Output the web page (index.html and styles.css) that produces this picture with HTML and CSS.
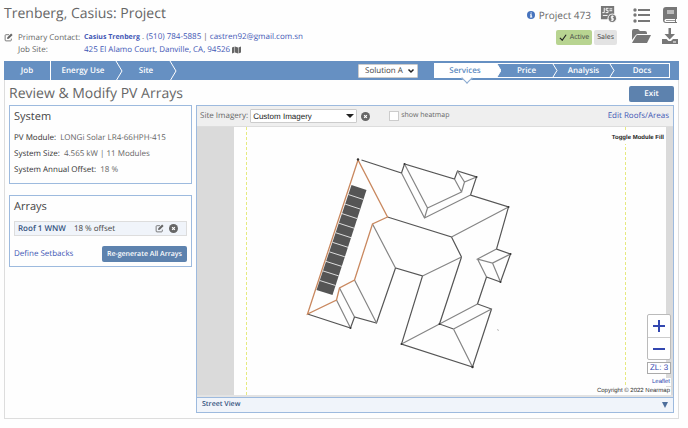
FILE: index.html
```html
<!DOCTYPE html>
<html lang="en">
<head>
    <meta charset="UTF-8">
    <meta name="viewport" content="width=device-width, initial-scale=1.0">
    <title>Trenberg, Casius: Project</title>
    <link rel="stylesheet" href="styles.css">
</head>
<body>

<header class="page-header">
    <div class="project-info">
        <h1>Trenberg, Casius: Project</h1>
        <div class="contact-grid">
            <a href="#" class="icon-link" aria-label="Edit contact">
                <svg class="icon-edit" viewBox="0 0 16 16"><path d="M9 3H3.500Q2 3 2 4.500V12.500Q2 14 3.500 14H11.500Q13 14 13 12.500V10" fill="none" stroke="currentColor" stroke-width="1.500"/><path d="M5.500 10.700L6 7.600L12.700 1L15.300 3.600L8.600 10.200Z" fill="currentColor"/></svg>
            </a>
            <span>Primary Contact:</span>
            <span class="contact-value"><a href="#"><b>Casius Trenberg</b></a> . <a href="#">(510) 784-5885</a> | <a href="#">castren92@gmail.com.sn</a></span>
            <span class="second-row">Job Site:</span>
            <span class="contact-value"><a href="#">425 El Alamo Court, Danville, CA, 94526</a>
                <svg class="icon-map" viewBox="0 0 18 16"><path d="M0 3L5 1V13L0 15ZM6 1L12 3V15L6 13ZM13 3L18 1V13L13 15Z" fill="#666"/></svg>
            </span>
        </div>
    </div>

    <div class="project-status">
        <div class="project-number">
            <svg class="icon-info" viewBox="0 0 16 16"><circle cx="8" cy="8" r="8" fill="#4673bd"/><path d="M7 3H9.500V5.200H7ZM6 6.500H9.500V11H10.500V12.800H6V11H7V8.300H6Z" fill="#fff"/></svg>
            <span>Project 473</span>
            <svg class="icon-report" viewBox="0 0 18 18"><path d="M1 0H15V9H10L8 14H1Z" fill="#777"/><path d="M4.500 2V7H2.500M9 2.500H6.500V4.500H8.500V7H6M10 3H13M10 5H13M3 10H8" fill="none" stroke="#fff" stroke-width="1"/><circle cx="13" cy="13" r="4.500" fill="#777" stroke="#fff"/><path d="M14.500 11H12V13H14V15H11.500M13 10V16" fill="none" stroke="#fff" stroke-width="1"/></svg>
        </div>
        <div class="badges">
            <span class="badge badge-active">
                <svg class="icon-check" viewBox="0 0 10 9"><path d="M1 5L4 8L9 1" fill="none" stroke="#222" stroke-width="1.500"/></svg>
                Active
            </span>
            <span class="badge">Sales</span>
        </div>
    </div>

    <div class="header-tools">
        <a href="#" aria-label="List"><svg viewBox="0 0 20 18"><g fill="none" stroke="currentColor" stroke-width="2"><path d="M7 4H19M7 9H19M7 15H19"/></g><g fill="currentColor"><circle cx="4" cy="4" r="1.700"/><circle cx="4" cy="9" r="1.700"/><circle cx="4" cy="15" r="1.700"/></g></svg></a>
        <a href="#" aria-label="Notes"><svg viewBox="0 0 20 18"><path d="M7 1H18V13H17V16H18V17H7Q4 17 4 14V4Q4 1 7 1Z" fill="currentColor"/><path d="M8 5H15M8 7H15" stroke="#fff" stroke-width="1"/><path d="M7 13H16V16H7Q5.500 16 5.500 14.500Q5.500 13 7 13Z" fill="#fff"/><path d="M7 14.500H16" stroke="#999" stroke-width="1"/></svg></a>
        <a href="#" aria-label="Files"><svg viewBox="0 0 20 18"><path d="M1 13V4Q1 2 3 2H7L9 4H14Q16 4 16 6V7H7Q5 7 4 9Z" fill="currentColor"/><path d="M6 8H20L16 16H1L5 9Z" fill="currentColor"/></svg></a>
        <a href="#" aria-label="Download"><svg viewBox="0 0 20 18"><path d="M9.500 1H12V7H16L10.700 12.500L5.500 7H9.500Z" fill="currentColor"/><path d="M3 12H7.500L9.500 14H12L14 12H19V17H3Z" fill="currentColor"/><path d="M14 15H17" stroke="#fff" stroke-width="1"/></svg></a>
    </div>
</header>

<main class="workspace">
    <nav class="nav-bar">
        <a href="#" class="step step-job">Job</a>
        <a href="#" class="step step-energy">Energy Use</a>
        <svg class="chevron" viewBox="0 0 8 20"><path d="M1 0L7 10L1 20"/></svg>
        <a href="#" class="step step-site">Site</a>
        <svg class="chevron" viewBox="0 0 8 20"><path d="M1 0L7 10L1 20"/></svg>

        <div class="select-wrap solution">
            <select aria-label="Solution">
                <option>Solution A</option>
            </select>
            <svg viewBox="0 0 8 8"><path d="M1.500 2.500L4 5L6.500 2.500" fill="none" stroke="#222" stroke-width="1.500"/></svg>
        </div>

        <div class="tabs">
            <a href="#" class="tab active">Services</a>
            <svg class="tab-chevron" viewBox="0 0 6 13"><path d="M0 0H2L6 6.500L2 13H0Z" fill="#fff"/></svg>
            <a href="#" class="tab">Price</a>
            <svg class="tab-chevron" viewBox="0 0 6 13"><path d="M1 0L5 6.500L1 13"/></svg>
            <a href="#" class="tab">Analysis</a>
            <svg class="tab-chevron" viewBox="0 0 6 13"><path d="M1 0L5 6.500L1 13"/></svg>
            <a href="#" class="tab tab-last">Docs</a>
        </div>
    </nav>

    <div class="title-row">
        <h2>Review &amp; Modify PV Arrays</h2>
        <button class="btn btn-exit">Exit</button>
    </div>

    <div class="content">
        <aside class="sidebar">
            <section class="panel system">
                <h3>System</h3>
                <p><b>PV Module:</b> LONGi Solar LR4-66HPH-415</p>
                <p><b>System Size:</b> 4.565 kW | 11 Modules</p>
                <p><b>System Annual Offset:</b> 18 %</p>
            </section>

            <section class="panel arrays">
                <h3>Arrays</h3>
                <div class="array-row">
                    <span class="array-name">Roof 1 WNW</span>
                    <span>18 % offset</span>
                    <a href="#" class="icon-link array-edit" aria-label="Edit array">
                        <svg class="icon-edit" viewBox="0 0 16 16"><path d="M9 3H3.500Q2 3 2 4.500V12.500Q2 14 3.500 14H11.500Q13 14 13 12.500V10" fill="none" stroke="currentColor" stroke-width="1.500"/><path d="M5.500 10.700L6 7.600L12.700 1L15.300 3.600L8.600 10.200Z" fill="currentColor"/></svg>
                    </a>
                    <a href="#" class="icon-link" aria-label="Remove array">
                        <svg class="icon-close" viewBox="0 0 16 16"><circle cx="8" cy="8" r="8" fill="currentColor"/><path d="M5.500 5.500L10.500 10.500M10.500 5.500L5.500 10.500" stroke="#fff" stroke-width="2"/></svg>
                    </a>
                </div>
                <div class="array-actions">
                    <a href="#">Define Setbacks</a>
                    <button class="btn btn-generate">Re-generate All Arrays</button>
                </div>
            </section>
        </aside>

        <section class="map-panel">
            <div class="map-toolbar">
                <label for="imagery">Site Imagery:</label>
                <div class="select-wrap imagery">
                    <select id="imagery">
                        <option>Custom Imagery</option>
                    </select>
                    <svg viewBox="0 0 8 8"><path d="M0 2H8L4 6Z" fill="#222"/></svg>
                </div>
                <a href="#" class="icon-link" aria-label="Clear imagery">
                    <svg class="icon-close" viewBox="0 0 16 16"><circle cx="8" cy="8" r="8" fill="currentColor"/><path d="M5.500 5.500L10.500 10.500M10.500 5.500L5.500 10.500" stroke="#fff" stroke-width="2"/></svg>
                </a>
                <input type="checkbox" id="heatmap">
                <label for="heatmap" class="heatmap-label">show heatmap</label>
                <a href="#" class="edit-roofs">Edit Roofs/Areas</a>
            </div>

            <div class="map">
                <div class="map-sheet">
                    <div class="map-bounds">
                        <svg class="roof" viewBox="300 150 220 225">
                            <!-- outer edges -->
                            <g fill="none" stroke="#555" stroke-width="1.200">
                                <path d="M361 160L401 173L404 164L454 179L457 171L476 177L470 195L508 207L496 249L510 254L500 282L486 277L477 304L491 309L472 367L401 344L422 276L395 268L376 323L354 317L350 328L307 314"/>
                                <path d="M387 217L451 237L461 257L439 324L453 329"/>
                            </g>
                            <!-- ridges and valleys -->
                            <g fill="none" stroke="#858585" stroke-width="1.200">
                                <path d="M401 173L424 218L470 195M404 164L427 208L461 192L454 179M427 208L424 218M457 171L464 182L476 177M464 182L461 192"/>
                                <path d="M451 237L508 207M422 276L461 257M372 224L395 268M354 280L376 323M339 288L354 317M336 300L350 328"/>
                                <path d="M401 344L439 324L477 304M453 329L491 309M453 329L472 367"/>
                                <path d="M496 249L477 259L492 263L510 254M492 263L500 282M477 259L486 277"/>
                            </g>
                            <!-- selected roof -->
                            <path d="M357.500 160L307 314L336 300L339 288L354 280L372 224L387 217Z" fill="none" stroke="#c9885f" stroke-width="1.300"/>
                            <g fill="#333">
                                <circle cx="357.500" cy="159.500" r="1.200"/><circle cx="404" cy="164" r="1"/><circle cx="476" cy="177" r="1"/><circle cx="508" cy="207" r="1"/><circle cx="510" cy="254" r="1"/><circle cx="500" cy="282" r="1"/><circle cx="472" cy="367" r="1.200"/><circle cx="401" cy="344" r="1"/><circle cx="350" cy="328" r="1"/><circle cx="439" cy="324" r="1"/>
                            </g>
                            <!-- 11 modules -->
                            <path d="M351 185L366 190L332 295L316 290Z" fill="#555"/>
                            <path d="M347.800 194.500L362.900 199.500M344.600 204.100L359.800 209.100M341.500 213.600L356.700 218.600M338.300 223.200L353.600 228.200M335.100 232.700L350.500 237.700M331.900 242.300L347.500 247.300M328.700 251.800L344.400 256.800M325.500 261.400L341.300 266.400M322.400 270.900L338.200 275.900M319.200 280.500L335.100 285.500" stroke="#ddd" stroke-width="1"/>
                            <path d="M497 329L498 331" stroke="#bbb"/>
                        </svg>
                    </div>
                </div>
                <div class="fill-toggle">Toggle Module Fill</div>
                <div class="map-controls">
                    <div class="zoom">
                        <button aria-label="Zoom in"><svg viewBox="0 0 14 14"><path d="M7 1V13M1 7H13"/></svg></button>
                        <button aria-label="Zoom out"><svg viewBox="0 0 14 14"><path d="M1 7H13"/></svg></button>
                    </div>
                    <div class="zoom-level">ZL: 3</div>
                    <a href="#">Leaflet</a>
                    <span>Copyright © 2022 Nearmap</span>
                </div>
            </div>

            <div class="street-view">
                <span>Street View</span>
                <svg viewBox="0 0 8 8"><path d="M1 1H7L4 7Z"/></svg>
            </div>
        </section>
    </div>
</main>

</body>
</html>
```
FILE: styles.css
```css
* {
    box-sizing: border-box;
}

body {
    margin: 0;
    padding: 4px 9px 8px 4px;
    background: #fefefe;
    color: #666;
    font-family: "Open Sans", sans-serif;
    font-size: 8px;
    line-height: 12px;
    text-rendering: geometricPrecision;
}

h1, h2, h3, p {
    margin: 0;
    font-weight: normal;
}

a {
    color: #4257b5;
    text-decoration: none;
}

svg {
    display: block;
}

select, button, input {
    font-family: inherit;
    font-size: 8px;
    margin: 0;
    text-rendering: inherit;
}

/* Header */
.page-header {
    display: flex;
    height: 57px;
}

.project-info {
    flex: 1;
}

h1, h2 {
    font-size: 14px;
    line-height: 20px;
}

.contact-grid {
    display: grid;
    grid-template-columns: 14px 66px 1fr;
    align-items: center;
    margin-top: 7px;
}

.second-row {
    grid-column: 2;
}

.contact-value b {
    font-size: 7px;
    font-weight: 700;
}

.icon-link {
    color: #666;
}

.icon-edit, .icon-close {
    width: 9px;
    height: 9px;
}

.icon-map {
    display: inline-block;
    width: 9px;
    height: 8px;
    vertical-align: middle;
}

.project-number {
    display: flex;
    align-items: center;
    justify-content: flex-end;
    height: 21px;
    font-size: 10px;
}

.icon-info {
    width: 8px;
    height: 8px;
    margin-right: 4px;
}

.icon-report {
    width: 17px;
    height: 17px;
    margin-left: 9px;
}

.badges {
    display: flex;
    justify-content: flex-end;
    gap: 2px;
    margin-top: 5px;
}

.badge {
    display: flex;
    align-items: center;
    gap: 3px;
    height: 15px;
    padding: 0 3px;
    border-radius: 2px;
    background: #e3e3e3;
    color: #444;
    font-size: 7px;
}

.badge-active {
    background: #b8d491;
}

.icon-check {
    width: 8px;
    height: 7px;
}

.header-tools {
    display: grid;
    grid-template-columns: 20px 20px;
    gap: 3px 8px;
    align-content: start;
    margin: 2px 0 0 14px;
}

.header-tools a {
    color: #777;
}

.header-tools svg {
    width: 20px;
    height: 18px;
}

/* Navigation */
.workspace {
    border: 1px solid #ddd;
    border-top: 0;
}

.nav-bar {
    display: flex;
    align-items: center;
    height: 19px;
    margin: 0 -1px;
    background: #6690c2;
}

.step, .tab {
    color: #fff;
    font-weight: 600;
    text-align: center;
}

.step {
    line-height: 19px;
}

.step-job {
    width: 47px;
    border-right: 1px solid #fff;
}

.step-energy {
    width: 64px;
}

.step-site {
    width: 46px;
}

.chevron, .tab-chevron {
    fill: none;
    stroke: #fff;
    stroke-width: 1;
}

.chevron {
    width: 8px;
    height: 20px;
}

.select-wrap {
    position: relative;
}

.select-wrap select {
    display: block;
    width: 100%;
    height: 14px;
    padding: 0 6px;
    border: 1px solid #ccc;
    border-radius: 1px;
    background: #fff;
    color: #444;
    appearance: none;
}

.select-wrap svg {
    position: absolute;
    top: 3px;
    right: 3px;
    width: 8px;
    height: 8px;
    pointer-events: none;
}

.solution {
    width: 60px;
    margin-left: auto;
}

.tabs {
    display: flex;
    align-items: center;
    width: 236px;
    height: 15px;
    margin: 0 9px 0 16px;
    border: 1px solid #fff;
}

.tab {
    flex: 0 0 51px;
    line-height: 13px;
}

.tab.active {
    position: relative;
    flex-basis: 60px;
    background: #fff;
    color: #5c8ac0;
}

.tab.tab-last {
    flex: 1;
}

.tab.active::after {
    content: "";
    position: absolute;
    left: 28px;
    bottom: -5px;
    width: 7px;
    height: 7px;
    border: 1px solid #8aaad0;
    border-top: 0;
    border-left: 0;
    background: #fff;
    transform: rotate(45deg);
}

.tab-chevron {
    width: 6px;
    height: 13px;
}

/* Page content */
.title-row {
    display: flex;
    align-items: center;
    justify-content: space-between;
    height: 25px;
    padding: 2px 4px 0;
}

.btn {
    height: 16px;
    padding: 0 5px;
    border: 0;
    border-radius: 2px;
    background: #5d82ae;
    color: #fff;
    font-weight: 600;
}

.btn-exit {
    width: 45px;
}

.btn-generate {
    font-size: 7px;
}

.content {
    display: flex;
    gap: 4px;
    padding: 0 4px 5px;
}

.sidebar {
    display: flex;
    flex: 0 0 183px;
    flex-direction: column;
    gap: 11px;
}

.panel {
    padding: 3px 4px;
    border: 1px solid #9dbade;
}

h3 {
    color: #444;
    font-size: 11px;
    line-height: 16px;
}

.system {
    height: 79px;
}

.system p {
    line-height: 16px;
}

.system h3 {
    margin-bottom: 5px;
}

.system b {
    margin-right: 2px;
    color: #333;
    font-weight: 500;
}

.arrays {
    height: 72px;
}

.array-row {
    display: flex;
    align-items: center;
    gap: 8px;
    height: 15px;
    margin-top: 6px;
    padding: 0 8px 0 3px;
    border: 1px solid #ddd;
    background: #f0f4fa;
    color: #444;
}

.array-name {
    color: #34527e;
    font-weight: 600;
}

.array-edit {
    margin-left: auto;
}

.array-row .icon-link + .icon-link {
    margin-left: -3px;
}

.array-actions {
    display: flex;
    align-items: center;
    justify-content: space-between;
    margin-top: 10px;
}

/* Map */
.map-panel {
    flex: 1;
    border: 1px solid #9dbade;
}

.map-toolbar {
    display: flex;
    align-items: center;
    height: 21px;
    padding: 0 4px 0 3px;
    border-bottom: 1px solid #ddd;
    background: #efefef;
}

.imagery {
    width: 107px;
    margin: 0 4px 0 2px;
}

.imagery select {
    padding: 0 2px;
    color: #222;
    font-family: "Liberation Sans", sans-serif;
}

#heatmap {
    width: 10px;
    height: 10px;
    margin: 0 2px 0 19px;
    border: 1px solid #ccc;
    background: #fff;
    appearance: none;
}

.heatmap-label {
    font-size: 7px;
}

.edit-roofs {
    margin-left: auto;
}

.map {
    position: relative;
    height: 270px;
    padding: 0 7px 0 37px;
    border-bottom: 2px solid #e3e3e3;
    background: #dadada;
}

.map-sheet {
    height: 268px;
    padding: 0 40px 0 12px;
    background: #fefefe;
}

.map-bounds {
    height: 268px;
    border-right: 1px dashed #e6ea80;
    border-left: 1px dashed #e6ea80;
}

.roof {
    width: 100%;
    height: 268px;
    padding: 23px 104px 20px 53px;
}

.fill-toggle {
    position: absolute;
    top: 5px;
    right: 7px;
    padding: 0 2px;
    background: #fefefe;
    color: #222;
    font-family: "Liberation Sans", sans-serif;
    font-size: 6px;
    font-weight: bold;
}

.map-controls {
    position: absolute;
    right: 2px;
    bottom: 0;
    display: flex;
    flex-direction: column;
    align-items: flex-end;
    font-family: "Liberation Sans", sans-serif;
    font-size: 6px;
    line-height: 8px;
}

.map-controls > a, .map-controls > span {
    padding: 0 1px;
    background: #fefefe;
    color: #333;
}

.map-controls > a {
    margin: 2px 0 1px;
    color: #2f46b0;
}

.zoom {
    border: 1px solid #bbb;
    border-radius: 2px;
    background: #fff;
}

.zoom button {
    display: block;
    width: 22px;
    height: 22px;
    padding: 4px;
    border: 0;
    background: none;
}

.zoom button + button {
    border-top: 1px solid #ccc;
}

.zoom svg {
    width: 14px;
    height: 14px;
    fill: none;
    stroke: #3347b0;
    stroke-width: 2;
}

.zoom-level {
    width: 24px;
    margin: 2px 0;
    border: 1px solid #aaa;
    background: #fff;
    color: #2f46b0;
    font-size: 8px;
    line-height: 10px;
    text-align: center;
}

.street-view {
    display: flex;
    align-items: center;
    justify-content: space-between;
    height: 15px;
    padding: 0 4px 0 5px;
    border-top: 1px solid #9dbade;
    background: #f0f4fa;
    color: #34527e;
    font-size: 7px;
    font-weight: 600;
}

.street-view svg {
    width: 8px;
    height: 8px;
    fill: #4d6e9c;
}
```
